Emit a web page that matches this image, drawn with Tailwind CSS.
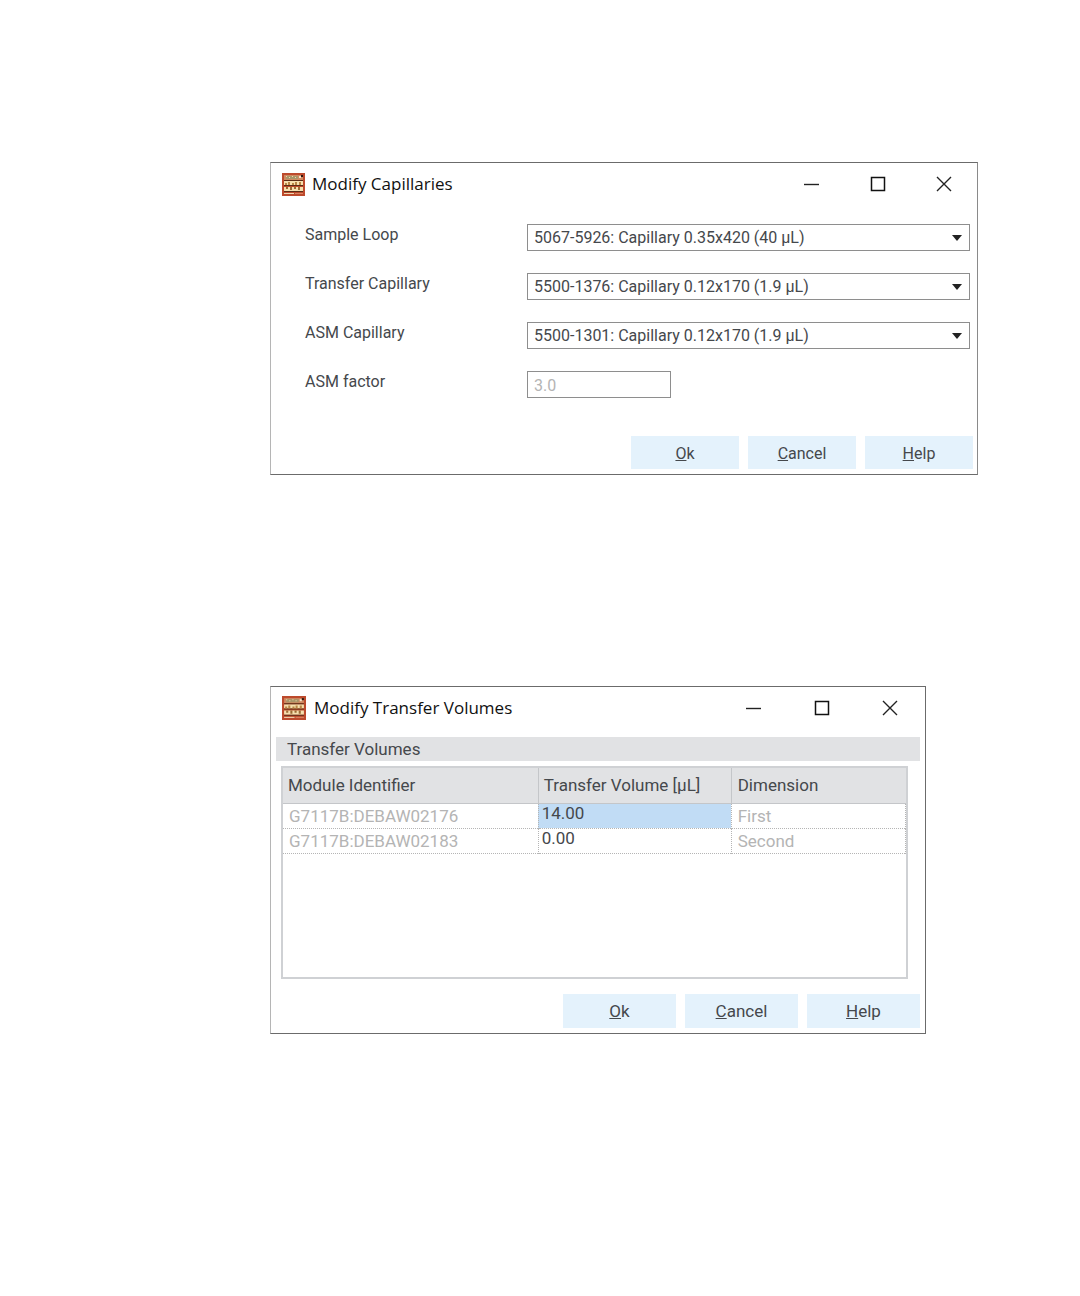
<!DOCTYPE html>
<html lang="en">
<head>
    <meta charset="UTF-8">
    <meta name="viewport" content="width=device-width, initial-scale=1.0">
    <title>Modify Capillaries</title>
    <script src="https://cdn.jsdelivr.net/npm/@tailwindcss/browser@4"></script>
</head>
<body class="bg-white font-['Roboto',sans-serif] text-base text-[#45484c]">
    <!-- Shared icons -->
    <svg class="hidden">
        <symbol id="icon-app" viewBox="0 0 23 23">
            <rect width="23" height="23" fill="#bd4a2c"/>
            <path d="M2 2h19v5H2z" fill="#cf8a62"/>
            <path d="M4 3h12v3H4z" fill="#a8966a"/>
            <path d="M4 3h1v1H4zM7 4h1v1H7zM10 3h1v1h-1zM13 4h1v1h-1z" fill="#efd9a8"/>
            <path d="M17 3h2v2h-2z" fill="#f6e6cc"/>
            <path d="M19 2h2v2h-2z" fill="#2c1610"/>
            <path d="M2 8h19v4H2zM2 14h19v4H2z" fill="#f5dfae"/>
            <path d="M2 7h19v1H2zM2 12h19v1H2zM2 18h19v1H2z" fill="#5a2c17"/>
            <path d="M3 10h2v2H3zM6 9h2v3H6zM10 10h2v2h-2zM13 9h2v3h-2zM17 9h2v3h-2z" fill="#b98645"/>
            <path d="M4 14h2v2H4zM8 14h2v3H8zM12 14h2v2h-2zM16 14h2v3h-2z" fill="#9a6a34"/>
            <path d="M2 20h10v1H2z" fill="#f0d9b4"/>
            <path d="M13 20h8v1h-8z" fill="#d98563"/>
        </symbol>
        <symbol id="icon-minimize" viewBox="0 0 16 16">
            <path d="M0 8.5h15" stroke="#222" stroke-width="1.4" fill="none"/>
        </symbol>
        <symbol id="icon-maximize" viewBox="0 0 16 16">
            <path d="M1.5 1.5h13v13h-13z" stroke="#111" stroke-width="1.5" fill="none"/>
        </symbol>
        <symbol id="icon-close" viewBox="0 0 16 16">
            <path d="M1 1l14 14M15 1L1 15" stroke="#222" stroke-width="1.4" fill="none"/>
        </symbol>
        <symbol id="icon-arrow" viewBox="0 0 10 6">
            <path d="M0 0h10L5 6z" fill="#222"/>
        </symbol>
    </svg>

    <main class="flex flex-col gap-[211px] pt-[162px] pl-[25%]">
        <!-- Modify Capillaries -->
        <section class="w-full max-w-[708px] border border-t-[#6b6b6b] border-r-[#8a8a8a] border-b-[#6b6b6b] border-l-[#b5b5b5]">
            <header class="flex items-center h-[42px] pl-[11px]">
                <svg class="size-[23px]"><use href="#icon-app"/></svg>
                <h1 class="flex-1 pl-[7px] font-['Open_Sans',sans-serif] text-[17px] text-[#111]">Modify Capillaries</h1>
                <button type="button" aria-label="Minimize" class="flex w-[66px] h-8 items-center justify-center"><svg class="size-4"><use href="#icon-minimize"/></svg></button>
                <button type="button" aria-label="Maximize" class="flex w-[66px] h-8 items-center justify-center"><svg class="size-4"><use href="#icon-maximize"/></svg></button>
                <button type="button" aria-label="Close" class="flex w-[66px] h-8 items-center justify-center"><svg class="size-4"><use href="#icon-close"/></svg></button>
            </header>

            <form>
                <div class="grid grid-cols-[222px_1fr] gap-y-[22px] pt-[19px] pl-[34px] pr-[7px]">
                    <label for="sampleLoop" class="leading-[22px]">Sample Loop</label>
                    <div class="relative">
                        <select id="sampleLoop" class="block w-full h-[27px] appearance-none border border-[#8e8e8e] bg-white pt-px pl-[6px] leading-6">
                            <option>5067-5926: Capillary 0.35x420 (40 µL)</option>
                        </select>
                        <svg class="pointer-events-none absolute right-2 top-[11px] w-[10px] h-[6px]"><use href="#icon-arrow"/></svg>
                    </div>

                    <label for="transferCapillary" class="leading-[22px]">Transfer Capillary</label>
                    <div class="relative">
                        <select id="transferCapillary" class="block w-full h-[27px] appearance-none border border-[#8e8e8e] bg-white pt-px pl-[6px] leading-6">
                            <option>5500-1376: Capillary 0.12x170 (1.9 µL)</option>
                        </select>
                        <svg class="pointer-events-none absolute right-2 top-[11px] w-[10px] h-[6px]"><use href="#icon-arrow"/></svg>
                    </div>

                    <label for="asmCapillary" class="leading-[22px]">ASM Capillary</label>
                    <div class="relative">
                        <select id="asmCapillary" class="block w-full h-[27px] appearance-none border border-[#8e8e8e] bg-white pt-px pl-[6px] leading-6">
                            <option>5500-1301: Capillary 0.12x170 (1.9 µL)</option>
                        </select>
                        <svg class="pointer-events-none absolute right-2 top-[11px] w-[10px] h-[6px]"><use href="#icon-arrow"/></svg>
                    </div>

                    <label for="asmFactor" class="leading-[22px]">ASM factor</label>
                    <input id="asmFactor" type="text" value="3.0" disabled class="w-36 h-[27px] border border-[#8e8e8e] bg-white pt-px pl-[6px] leading-6 text-[#b4b4b4]">
                </div>

                <div class="flex justify-end gap-[9px] pt-[38px] pr-1 pb-[5px]">
                    <button type="button" class="w-[108px] h-[33px] bg-[#e4f2fc] pt-0.5"><u>O</u>k</button>
                    <button type="button" class="w-[108px] h-[33px] bg-[#e4f2fc] pt-0.5"><u>C</u>ancel</button>
                    <button type="button" class="w-[108px] h-[33px] bg-[#e4f2fc] pt-0.5"><u>H</u>elp</button>
                </div>
            </form>
        </section>

        <!-- Modify Transfer Volumes -->
        <section class="w-full max-w-[656px] border border-t-[#6b6b6b] border-r-[#6b6b6b] border-b-[#6b6b6b] border-l-[#b5b5b5] text-[17px]">
            <header class="flex items-center h-[42px] pl-[11px] pr-px">
                <svg class="size-6"><use href="#icon-app"/></svg>
                <h1 class="flex-1 pl-2 font-['Open_Sans',sans-serif] text-[#111]">Modify Transfer Volumes</h1>
                <button type="button" aria-label="Minimize" class="flex w-[68px] h-8 items-center justify-center"><svg class="size-4"><use href="#icon-minimize"/></svg></button>
                <button type="button" aria-label="Maximize" class="flex w-[68px] h-8 items-center justify-center"><svg class="size-4"><use href="#icon-maximize"/></svg></button>
                <button type="button" aria-label="Close" class="flex w-[68px] h-8 items-center justify-center"><svg class="size-4"><use href="#icon-close"/></svg></button>
            </header>

            <div class="px-[5px] pt-2">
                <h2 class="h-6 bg-[#e1e2e4] pl-[11px] leading-6">Transfer Volumes</h2>

                <div class="mt-[5px] ml-[5px] mr-3 h-[213px] border-2 border-[#cfd1d4]">
                    <table class="w-full table-fixed border-collapse text-left">
                        <thead>
                            <tr class="h-[35px] bg-[#e1e2e4]">
                                <th class="w-[41%] border-r border-b border-[#c4c6c9] pl-[5px] font-normal">Module Identifier</th>
                                <th class="w-[31%] border-r border-b border-[#c4c6c9] pl-[5px] font-normal">Transfer Volume [µL]</th>
                                <th class="border-b border-[#c4c6c9] pl-[6px] font-normal">Dimension</th>
                            </tr>
                        </thead>
                        <tbody>
                            <tr class="h-[25px] border-b border-dotted border-[#b5b5b5] leading-5">
                                <td class="border-r border-dotted border-[#b5b5b5] pl-[6px] text-[#b4b4b4]">G7117B:DEBAW02176</td>
                                <td class="bg-[#c1dcf5] pl-[3px] align-top leading-[18px]">14.00</td>
                                <td class="border-x border-dotted border-[#b5b5b5] pl-[6px] text-[#b4b4b4]">First</td>
                            </tr>
                            <tr class="h-[25px] border-b border-dotted border-[#b5b5b5] leading-5">
                                <td class="border-r border-dotted border-[#b5b5b5] pl-[6px] text-[#b4b4b4]">G7117B:DEBAW02183</td>
                                <td class="pl-[3px] align-top leading-[18px]">0.00</td>
                                <td class="border-x border-dotted border-[#b5b5b5] pl-[6px] text-[#b4b4b4]">Second</td>
                            </tr>
                        </tbody>
                    </table>
                </div>
            </div>

            <div class="flex justify-end gap-[9px] pt-[15px] pr-[5px] pb-[5px]">
                <button type="button" class="w-[113px] h-[34px] bg-[#e4f2fc] pt-0.5"><u>O</u>k</button>
                <button type="button" class="w-[113px] h-[34px] bg-[#e4f2fc] pt-0.5"><u>C</u>ancel</button>
                <button type="button" class="w-[113px] h-[34px] bg-[#e4f2fc] pt-0.5"><u>H</u>elp</button>
            </div>
        </section>
    </main>
</body>
</html>
